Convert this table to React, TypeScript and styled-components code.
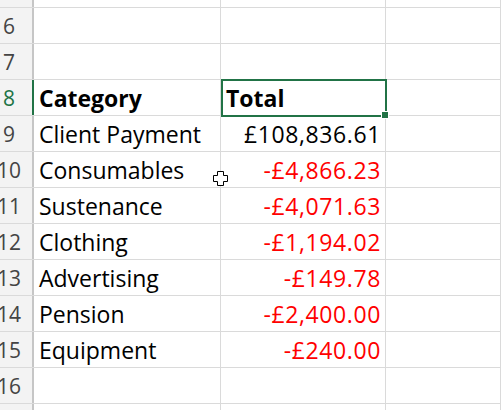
import styled, { createGlobalStyle } from 'styled-components';

const GlobalStyle = createGlobalStyle`
  html, body {
    margin: 0;
    padding: 0;
    background: #ffffff;
    overflow: hidden;
  }
`;

const Sheet = styled.div`
  position: relative;
  width: 501px;
  height: 410px;
  overflow: hidden;
  background: #ffffff;
  font-family: "Open Sans", "Liberation Sans", sans-serif;
`;

const Row = styled.div<{ $height: number }>`
  display: grid;
  grid-template-columns: 34px 187px 165px 1fr;
  height: ${props => props.$height}px;
  box-sizing: border-box;
  border-bottom: 1px solid #dadada;
`;

const RowHeader = styled.div<{ $active?: boolean }>`
  display: flex;
  align-items: center;
  justify-content: center;
  padding-right: 14px;
  background: #f3f3f3;
  border-right: 2px solid ${props => props.$active ? '#217346' : '#c6c6c6'};
  color: ${props => props.$active ? '#217346' : '#444444'};
  font-size: 21px;
  overflow: hidden;
  white-space: nowrap;
`;

const Cell = styled.div<{ $align?: 'left' | 'right'; $bold?: boolean; $negative?: boolean }>`
  display: flex;
  align-items: center;
  justify-content: ${props => props.$align === 'right' ? 'flex-end' : 'flex-start'};
  padding: 0 ${props => props.$align === 'right' ? '4px' : '6px'} 0 5px;
  border-right: 1px solid #dadada;
  font-size: 23px;
  letter-spacing: ${props => props.$align === 'right' ? '0.6px' : '0'};
  font-weight: ${props => props.$bold ? 700 : 400};
  color: ${props => props.$negative ? '#ff0000' : '#000000'};
  white-space: nowrap;
  overflow: hidden;
`;

const Tail = styled.span`
  margin-top: -34px;
  margin-left: 70px;
  font-size: 23px;
`;

const Selection = styled.div`
  position: absolute;
  left: 221px;
  top: 79px;
  width: 166px;
  height: 38px;
  box-sizing: border-box;
  border: 2px solid #217346;
  pointer-events: none;
`;

const FillHandle = styled.div`
  position: absolute;
  right: -4px;
  bottom: -4px;
  width: 6px;
  height: 6px;
  background: #217346;
  border: 1px solid #ffffff;
`;

const Cursor = styled.svg`
  position: absolute;
  left: 212px;
  top: 170px;
`;

type Line = { row: number; category: string; total: string; negative: boolean };

const lines: Line[] = [
  { row: 9, category: 'Client Payment', total: '£108,836.61', negative: false },
  { row: 10, category: 'Consumables', total: '-£4,866.23', negative: true },
  { row: 11, category: 'Sustenance', total: '-£4,071.63', negative: true },
  { row: 12, category: 'Clothing', total: '-£1,194.02', negative: true },
  { row: 13, category: 'Advertising', total: '-£149.78', negative: true },
  { row: 14, category: 'Pension', total: '-£2,400.00', negative: true },
  { row: 15, category: 'Equipment', total: '-£240.00', negative: true },
];

function EmptyRow({ n, height = 36 }: { n?: number; height?: number }) {
  return (
    <Row $height={height}>
      <RowHeader>{n}</RowHeader>
      <Cell />
      <Cell />
      <Cell />
    </Row>
  );
}

export default function App() {
  return (
    <Sheet>
      <GlobalStyle />
      <Row $height={8}>
        <RowHeader />
        <Cell />
        <Cell><Tail>,</Tail></Cell>
        <Cell />
      </Row>
      <EmptyRow n={6} />
      <EmptyRow n={7} />
      <Row $height={36}>
        <RowHeader $active>8</RowHeader>
        <Cell $bold>Category</Cell>
        <Cell $bold>Total</Cell>
        <Cell />
      </Row>
      {lines.map(line => (
        <Row $height={36} key={line.row}>
          <RowHeader>{line.row}</RowHeader>
          <Cell>{line.category}</Cell>
          <Cell $align="right" $negative={line.negative}>{line.total}</Cell>
          <Cell />
        </Row>
      ))}
      <EmptyRow n={16} />
      <EmptyRow />
      <Selection>
        <FillHandle />
      </Selection>
      <Cursor width="17" height="17" viewBox="0 0 17 17">
        <path
          d="M5.5 1.5 H11.5 V5.5 H15.5 V11.5 H11.5 V15.5 H5.5 V11.5 H1.5 V5.5 H5.5 Z"
          fill="#ffffff"
          stroke="#000000"
          strokeWidth="1"
        />
      </Cursor>
    </Sheet>
  );
}
